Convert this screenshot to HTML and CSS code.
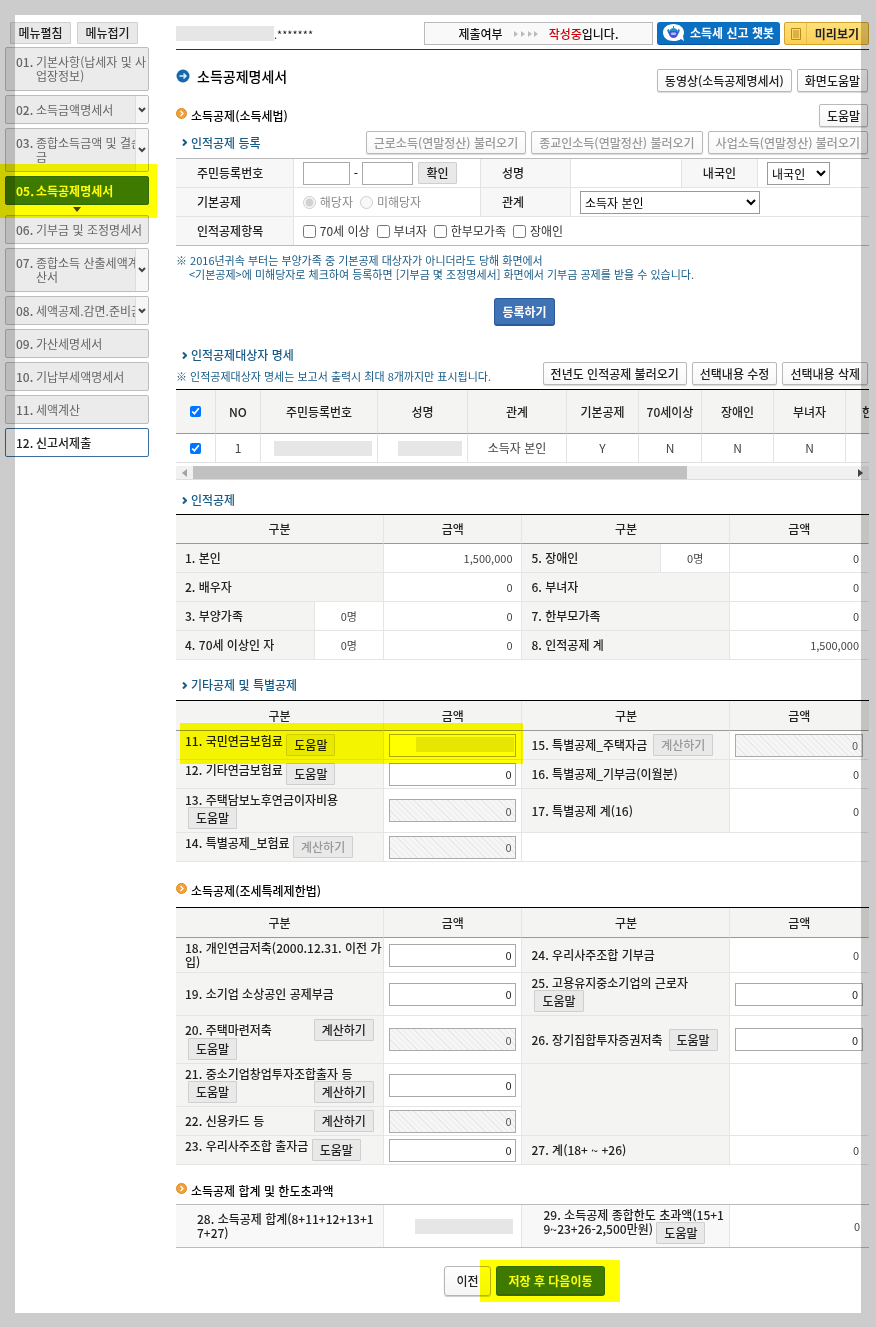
FILE: index.html
```html
<!DOCTYPE html>
<html lang="ko">
<head>
<meta charset="utf-8">
<meta name="viewport" content="width=device-width, initial-scale=1">
<title>소득공제명세서</title>
<link rel="stylesheet" href="styles.css">
</head>
<body>
<div class="page">
  <nav class="side" aria-label="신고서 메뉴">
    <div class="side-tools">
      <button class="btn gray" type="button">메뉴펼침</button>
      <button class="btn gray" type="button">메뉴접기</button>
    </div>
    <ul class="menu">
      <li><a href="#" class="item tall"><b>01.</b><span>기본사항(납세자 및 사업장정보)</span></a></li>
      <li><a href="#" class="item more"><b>02.</b><span>소득금액명세서</span><i><svg viewBox="0 0 8 6"><path d="M1 1l3 3 3-3"/></svg></i></a></li>
      <li><a href="#" class="item tall more"><b>03.</b><span>종합소득금액 및 결손금</span><i><svg viewBox="0 0 8 6"><path d="M1 1l3 3 3-3"/></svg></i></a></li>
      <li class="current"><a href="#" class="item on"><b>05.</b><span>소득공제명세서</span></a><svg class="caret" viewBox="0 0 8 5"><path d="M0 0h8L4 5z"/></svg><div class="mark mark-menu"></div></li>
      <li><a href="#" class="item"><b>06.</b><span>기부금 및 조정명세서</span></a></li>
      <li><a href="#" class="item tall more"><b>07.</b><span>종합소득 산출세액계산서</span><i><svg viewBox="0 0 8 6"><path d="M1 1l3 3 3-3"/></svg></i></a></li>
      <li><a href="#" class="item more"><b>08.</b><span class="one">세액공제.감면.준비금</span><i><svg viewBox="0 0 8 6"><path d="M1 1l3 3 3-3"/></svg></i></a></li>
      <li><a href="#" class="item"><b>09.</b><span>가산세명세서</span></a></li>
      <li><a href="#" class="item"><b>10.</b><span>기납부세액명세서</span></a></li>
      <li><a href="#" class="item"><b>11.</b><span>세액계산</span></a></li>
      <li><a href="#" class="item open"><b>12.</b><span>신고서제출</span></a></li>
    </ul>
  </nav>

  <main class="main">
    <header class="top">
      <div class="who"><span class="veil"></span>.*******</div>
      <div class="state"><span>제출여부</span>
        <svg class="steps" viewBox="0 0 24 6"><path d="M0 0l4 3-4 3zM7 0l4 3-4 3zM14 0l4 3-4 3zM20 0l4 3-4 3z"/></svg>
        <span><em>작성중</em>입니다.</span></div>
      <button class="chat" type="button"><svg viewBox="0 0 22 18"><path d="M10.500 0C4.500 0 0 3.500 0 8.500S4.500 17 10.500 17c3 0 5.500-.6 7.500-2l3 2-1-5c.7-1 1-2.200 1-3.500C21 3.500 16.500 0 10.500 0z" fill="#fff"/><path d="M5 5.500c1 2 0 3 2 4M16 5.500c-1 2 0 3-2 4" fill="none" stroke="#2878c4" stroke-width="2"/><circle cx="10.500" cy="9.500" r="4.500" fill="#4a50d8"/><path d="M6.500 7c1-4 7-4 8 0z" fill="#2a8cc9"/><rect x="8" y="8.500" width="5" height="2.500" rx="1" fill="#a9c4f8"/><path d="M10.500 5V2" stroke="#2a8cc9"/></svg>소득세 신고 챗봇</button>
      <button class="preview" type="button"><span><svg viewBox="0 0 10 12"><path d="M.5.5h9v11h-9zM2 3h6M2 5h6M2 7h6M2 9h6"/></svg></span>미리보기</button>
    </header>

    <div class="row title-row">
      <h1><svg viewBox="0 0 14 14"><circle cx="7" cy="7" r="6.500" fill="#1769ad"/><path d="M3.500 7h6M7.500 4.500L10 7 7.500 9.500" fill="none" stroke="#d9f0ff" stroke-width="1.500"/></svg>소득공제명세서</h1>
      <div class="btns"><button class="btn" type="button">동영상(소득공제명세서)</button><button class="btn" type="button">화면도움말</button></div>
    </div>

    <div class="row law-row">
      <h2 class="sec"><svg viewBox="0 0 11 11"><circle cx="5.500" cy="5.500" r="5" fill="#f2a136" stroke="#dc8b25"/><path d="M4.500 3l2.500 2.500L4.500 8" fill="none" stroke="#fff" stroke-width="1.300"/></svg>소득공제(소득세법)</h2>
      <div class="btns"><button class="btn" type="button">도움말</button></div>
    </div>
    <div class="row load-row">
      <h3 class="sub"><svg viewBox="0 0 5 7"><path d="M1 .5l3 3-3 3"/></svg>인적공제 등록</h3>
      <div class="btns"><button class="btn" type="button" disabled>근로소득(연말정산) 불러오기</button><button class="btn" type="button" disabled>종교인소득(연말정산) 불러오기</button><button class="btn" type="button" disabled>사업소득(연말정산) 불러오기</button></div>
    </div>

    <table class="form">
      <colgroup><col class="f1"><col class="f2"><col class="f3"><col class="f4"><col class="f5"><col class="f6"></colgroup>
      <tr><th scope="row"><label for="rrn1">주민등록번호</label></th><td><div class="line"><input id="rrn1" class="box rrn1" type="text"><span>-</span><input class="box rrn2" type="text" aria-label="주민등록번호 뒷자리"><button class="btn gray ok" type="button">확인</button></div></td><th scope="row">성명</th><td></td><th scope="row"><label for="nat">내국인</label></th><td class="last"><select id="nat" class="nat"><option>내국인</option></select></td></tr>
      <tr><th scope="row">기본공제</th><td><div class="line"><label class="off"><input type="radio" name="basic" checked disabled>해당자</label><label class="off"><input type="radio" name="basic" disabled>미해당자</label></div></td><th scope="row"><label for="rel">관계</label></th><td colspan="3" class="last"><select id="rel" class="rel"><option>소득자 본인</option></select></td></tr>
      <tr><th scope="row">인적공제항목</th><td colspan="5" class="last"><div class="line"><label><input type="checkbox">70세 이상</label><label><input type="checkbox">부녀자</label><label><input type="checkbox">한부모가족</label><label><input type="checkbox">장애인</label></div></td></tr>
    </table>
    <p class="note">※ 2016년귀속 부터는 부양가족 중 기본공제 대상자가 아니더라도 당해 화면에서<br>&lt;기본공제&gt;에 미해당자로 체크하여 등록하면 [기부금 몇 조정명세서] 화면에서 기부금 공제를 받을 수 있습니다.</p>
    <div class="center reg"><button class="register" type="button">등록하기</button></div>

    <h3 class="sub target"><svg viewBox="0 0 5 7"><path d="M1 .5l3 3-3 3"/></svg>인적공제대상자 명세</h3>
    <div class="row list-row">
      <p class="note flat">※ 인적공제대상자 명세는 보고서 출력시 최대 8개까지만 표시됩니다.</p>
      <div class="btns"><button class="btn" type="button">전년도 인적공제 불러오기</button><button class="btn" type="button">선택내용 수정</button><button class="btn" type="button">선택내용 삭제</button></div>
    </div>
    <div class="list-wrap">
      <table class="list">
        <colgroup><col class="l1"><col class="l2"><col class="l3"><col class="l4"><col class="l5"><col class="l6"><col class="l7"><col class="l6"><col class="l6"><col class="l8"></colgroup>
        <thead><tr><th><input type="checkbox" checked aria-label="전체 선택"></th><th>NO</th><th>주민등록번호</th><th>성명</th><th>관계</th><th>기본공제</th><th>70세이상</th><th>장애인</th><th>부녀자</th><th>한부모가족</th></tr></thead>
        <tbody><tr><td><input type="checkbox" checked aria-label="1번 선택"></td><td>1</td><td class="shade"><span class="veil"></span></td><td class="shade"><span class="veil short"></span></td><td>소득자 본인</td><td>Y</td><td>N</td><td>N</td><td>N</td><td></td></tr></tbody>
      </table>
    </div>
    <div class="scroll"><svg viewBox="0 0 5 8"><path d="M5 0v8L0 4z" fill="#a3a3a3"/></svg><div class="track"><div class="thumb"></div></div><svg viewBox="0 0 5 8"><path d="M0 0v8l5-4z" fill="#444"/></svg></div>

    <h3 class="sub personal"><svg viewBox="0 0 5 7"><path d="M1 .5l3 3-3 3"/></svg>인적공제</h3>
    <table class="sheet">
      <colgroup><col class="c2"><col class="c1"><col class="c2"><col class="c2"><col class="c1"><col class="c2"></colgroup>
      <thead><tr><th colspan="2">구분</th><th>금액</th><th colspan="2">구분</th><th>금액</th></tr></thead>
      <tbody>
        <tr><th colspan="2">1. 본인</th><td>1,500,000</td><th>5. 장애인</th><td class="mid">0명</td><td>0</td></tr>
        <tr><th colspan="2">2. 배우자</th><td>0</td><th colspan="2">6. 부녀자</th><td>0</td></tr>
        <tr><th>3. 부양가족</th><td class="mid">0명</td><td>0</td><th colspan="2">7. 한부모가족</th><td>0</td></tr>
        <tr><th>4. 70세 이상인 자</th><td class="mid">0명</td><td>0</td><th colspan="2">8. 인적공제 계</th><td>1,500,000</td></tr>
      </tbody>
    </table>

    <h3 class="sub other"><svg viewBox="0 0 5 7"><path d="M1 .5l3 3-3 3"/></svg>기타공제 및 특별공제</h3>
    <div class="marked">
    <table class="sheet wide-head">
      <colgroup><col class="c3"><col class="c2"><col class="c3"><col class="c2"></colgroup>
      <thead><tr><th>구분</th><th>금액</th><th>구분</th><th>금액</th></tr></thead>
      <tbody>
        <tr><th><label for="a11">11. 국민연금보험료</label> <button class="btn gray" type="button">도움말</button></th><td class="in"><div class="covered"><input id="a11" class="box" type="text"><span class="veil"></span></div></td><th><div class="line wide"><span>15. 특별공제_주택자금</span><button class="btn gray" type="button" disabled>계산하기</button></div></th><td class="in"><input class="box" type="text" value="0" readonly aria-label="15. 특별공제_주택자금"></td></tr>
        <tr><th><label for="a12">12. 기타연금보험료</label> <button class="btn gray" type="button">도움말</button></th><td class="in"><input id="a12" class="box" type="text" value="0"></td><th>16. 특별공제_기부금(이월분)</th><td>0</td></tr>
        <tr class="h44"><th><label for="a13">13. 주택담보노후연금이자비용</label><br><button class="btn gray ind" type="button">도움말</button></th><td class="in"><input id="a13" class="box" type="text" value="0" readonly></td><th>17. 특별공제 계(16)</th><td>0</td></tr>
        <tr><th><label for="a14">14. 특별공제_보험료</label> <button class="btn gray" type="button" disabled>계산하기</button></th><td class="in"><input id="a14" class="box" type="text" value="0" readonly></td><td colspan="2"></td></tr>
      </tbody>
    </table>
    <div class="mark mark-row"></div>
    </div>

    <h2 class="sec special"><svg viewBox="0 0 11 11"><circle cx="5.500" cy="5.500" r="5" fill="#f2a136" stroke="#dc8b25"/><path d="M4.500 3l2.500 2.500L4.500 8" fill="none" stroke="#fff" stroke-width="1.300"/></svg>소득공제(조세특례제한법)</h2>
    <table class="sheet wide-head">
      <colgroup><col class="c3"><col class="c2"><col class="c3"><col class="c2"></colgroup>
      <thead><tr><th>구분</th><th>금액</th><th>구분</th><th>금액</th></tr></thead>
      <tbody>
        <tr class="h35"><th><label for="a18">18. 개인연금저축(2000.12.31. 이전 가입)</label></th><td class="in"><input id="a18" class="box" type="text" value="0"></td><th>24. 우리사주조합 기부금</th><td>0</td></tr>
        <tr class="h43"><th><label for="a19">19. 소기업 소상공인 공제부금</label></th><td class="in"><input id="a19" class="box" type="text" value="0"></td><th><label for="a25">25. 고용유지중소기업의 근로자</label><br><button class="btn gray ind" type="button">도움말</button></th><td class="in"><input id="a25" class="box" type="text" value="0"></td></tr>
        <tr class="h48"><th><div class="line split"><label for="a20">20. 주택마련저축</label><button class="btn gray" type="button">계산하기</button></div><button class="btn gray ind tuck" type="button">도움말</button></th><td class="in"><input id="a20" class="box" type="text" value="0" readonly></td><th><div class="line wide"><label for="a26">26. 장기집합투자증권저축</label><button class="btn gray" type="button">도움말</button></div></th><td class="in"><input id="a26" class="box" type="text" value="0"></td></tr>
        <tr class="h43"><th><label for="a21">21. 중소기업창업투자조합출자 등</label><div class="line split"><button class="btn gray ind" type="button">도움말</button><button class="btn gray" type="button">계산하기</button></div></th><td class="in"><input id="a21" class="box" type="text" value="0"></td><th rowspan="2"></th><td rowspan="2"></td></tr>
        <tr><th><div class="line split"><label for="a22">22. 신용카드 등</label><button class="btn gray" type="button">계산하기</button></div></th><td class="in edge"><input id="a22" class="box" type="text" value="0" readonly></td></tr>
        <tr><th><label for="a23">23. 우리사주조합 출자금</label> <button class="btn gray" type="button">도움말</button></th><td class="in"><input id="a23" class="box" type="text" value="0"></td><th>27. 계(18+ ~ +26)</th><td>0</td></tr>
      </tbody>
    </table>

    <h2 class="sec total"><svg viewBox="0 0 11 11"><circle cx="5.500" cy="5.500" r="5" fill="#f2a136" stroke="#dc8b25"/><path d="M4.500 3l2.500 2.500L4.500 8" fill="none" stroke="#fff" stroke-width="1.300"/></svg>소득공제 합계 및 한도초과액</h2>
    <table class="sheet sum">
      <colgroup><col class="c3"><col class="c2"><col class="c3"><col class="c2"></colgroup>
      <tr><th>28. 소득공제 합계(8+11+12+13+17+27)</th><td><span class="veil"></span></td><th>29. 소득공제 종합한도 초과액(15+19~23+26-2,500만원) <button class="btn gray" type="button">도움말</button></th><td>0</td></tr>
    </table>

    <div class="center foot">
      <button class="prev" type="button">이전</button>
      <div class="marked"><button class="next" type="button">저장 후 다음이동</button><div class="mark mark-next"></div></div>
    </div>
  </main>
  <div class="shade-frame"></div>
</div>
</body>
</html>
```
FILE: styles.css
```css
* { box-sizing: border-box; }
body { margin: 0; background: #fff; }
body, button, input, select {
  font-family: "Noto Sans CJK KR", "Noto Sans", sans-serif;
  font-size: 12px;
  line-height: 14px;
  color: #222;
}
h1, h2, h3, p, ul { margin: 0; padding: 0; }
ul { list-style: none; }
a { color: inherit; text-decoration: none; }
input { margin: 0; }

.page { position: relative; display: flex; align-items: flex-start; padding: 22px 7px 32px 5px; }
.shade-frame { position: absolute; inset: 0; border: 15px solid rgba(0, 0, 0, .2); pointer-events: none; z-index: 5; }
.mark { position: absolute; background: #ff0; mix-blend-mode: multiply; pointer-events: none; z-index: 2; }
.marked, .current { position: relative; }
.veil { display: inline-block; width: 98px; height: 15px; background: #e6e6e6; }
.veil.short { width: 64px; }

/* buttons */
.btn {
  height: 23px;
  padding: 0 7px;
  border: 1px solid #b9b9b9;
  border-radius: 2px;
  background: linear-gradient(#fff, #f7f7f7);
  box-shadow: 0 1px 1px rgba(0, 0, 0, .15);
  font-weight: 500;
  white-space: nowrap;
}
.btn:disabled { color: #999; }
.btn.gray { height: 22px; background: #e9e9e9; border-color: #cfcfcf; border-radius: 1px; box-shadow: none; vertical-align: top; }
.btns { display: flex; gap: 5px; margin-right: 1px; }

/* side menu */
.side { width: 144px; flex: none; margin-right: 27px; }
.side-tools { display: flex; gap: 6px; padding-left: 5px; margin-bottom: 3px; }
.side-tools .btn { width: 61px; padding: 0; }
.menu { display: flex; flex-direction: column; gap: 4px; }
.item {
  position: relative;
  display: flex;
  align-items: center;
  gap: 4px;
  height: 29px;
  padding: 0 0 0 10px;
  border: 1px solid #bdbdbd;
  border-radius: 2px;
  background: #ebebeb;
  color: #666;
  overflow: hidden;
  word-break: break-all;
}
.item b { width: 16px; flex: none; font-weight: 500; white-space: nowrap; }
.item.tall { height: 44px; }
.item.tall b { align-self: flex-start; padding-top: 7px; }
.item .one { white-space: nowrap; }
.item i { position: absolute; top: 0; right: 0; bottom: 0; width: 13px; display: flex; align-items: center; justify-content: center; background: #f6f6f6; border-left: 1px solid #ddd; }
.item i svg { width: 8px; height: 6px; fill: none; stroke: #444; stroke-width: 2; }
.item.on { background: #3f7a0d; border-color: #356a08; color: #fff; font-weight: 700; }
.item.on b { font-weight: 700; }
.item.open { background: #fff; border-color: #3c6f9f; color: #222; font-weight: 500; }
.current { padding-bottom: 6px; }
.caret { position: absolute; left: 68px; bottom: -1px; width: 8px; height: 5px; fill: #444; }
.mark-menu { left: -5px; top: -12px; right: -8px; bottom: -7px; }

/* top bar */
.main { flex: 1; min-width: 0; }
.top { display: flex; align-items: center; gap: 4px; padding-bottom: 4px; border-bottom: 1px solid #333; }
.who { flex: 1; display: flex; align-items: center; font-size: 11px; }
.state { display: flex; align-items: center; justify-content: center; gap: 11px; width: 229px; height: 23px; border: 1px solid #bbb; background: #f9f9f9; font-weight: 500; color: #111; }
.state em { font-style: normal; color: #d0000b; }
.steps { width: 24px; height: 6px; fill: #bbb; }
.chat { display: flex; align-items: center; justify-content: center; gap: 5px; width: 123px; height: 23px; padding: 0; border: 0; border-radius: 3px; background: #0b6fc2; border-bottom: 1px solid #08549a; color: #fff; font-weight: 700; white-space: nowrap; }
.chat svg { width: 22px; height: 18px; }
.preview { display: flex; align-items: center; width: 85px; height: 23px; padding: 0 9px 0 0; justify-content: space-between; border: 1px solid #d3a52f; border-radius: 2px; background: linear-gradient(#ffe07a, #fbcf55); font-weight: 700; }
.preview span { width: 22px; height: 100%; display: flex; align-items: center; justify-content: center; border-right: 1px solid #e8bd4a; }
.preview svg { width: 10px; height: 12px; fill: none; stroke: #b98c1e; }

/* headings */
.row { display: flex; justify-content: space-between; align-items: center; }
.title-row { margin-top: 19px; align-items: flex-start; }
h1 { display: flex; align-items: center; gap: 7px; font-size: 14px; font-weight: 500; color: #000; }
h1 svg { width: 14px; height: 14px; }
.sec { display: flex; align-items: center; gap: 4px; font-size: 12px; font-weight: 500; color: #000; }
.sec svg { width: 11px; height: 11px; margin-bottom: 5px; }
.sub { display: flex; align-items: center; gap: 4px; padding-left: 6px; font-size: 12px; font-weight: 500; color: #175b87; }
.sub svg { width: 5px; height: 7px; fill: none; stroke: #175b87; stroke-width: 2; }
.law-row { margin-top: 12px; }
.load-row { margin-top: 4px; }
.target { margin-top: 22px; }
.personal { margin-top: 13px; }
.other { margin-top: 18px; }
.special { margin-top: 21px; }
.total { margin-top: 18px; }

/* form */
table { width: 100%; border-spacing: 0; table-layout: fixed; }
.form { margin-top: 4px; border-top: 1px solid #bbb; border-bottom: 1px solid #bbb; }
.f1 { width: 17%; } .f2 { width: 27%; } .f3 { width: 13%; } .f4 { width: 16%; } .f5 { width: 11%; } .f6 { width: 16%; }
.form tr { height: 29px; }
.form th, .form td { padding: 0 9px; border-bottom: 1px solid #e3e3e3; border-right: 1px solid #e3e3e3; text-align: left; font-weight: 500; }
.form th { padding-left: 21px; background: #f7f7f7; }
.form .last { border-right: 0; }
.form tr:last-child > * { border-bottom: 0; }
.form tr:last-child { height: 28px; }
.line { display: flex; align-items: center; gap: 4px; }
.line label { display: flex; align-items: center; gap: 4px; color: #333; font-weight: 400; white-space: nowrap; }
.line label + label { margin-left: 3px; }
.line .off { color: #888; }
.line input[type=checkbox], .line input[type=radio] { width: 13px; height: 13px; }
.box { height: 23px; border: 1px solid #aaa; border-radius: 0; padding: 0 4px; background: #fff; text-align: right; }
.box:read-only { color: #555; background: repeating-linear-gradient(45deg, #f6f6f6 0 3px, #e9e9e9 3px 4px); }
.rrn1 { width: 47px; }
.rrn2 { width: 51px; }
.ok { width: 39px; padding: 0; margin-left: 1px; }
select { height: 23px; padding: 0; border: 1px solid #999; border-radius: 0; background: #fff; color: #000; vertical-align: middle; }
.nat { width: 63px; }
.rel { width: 180px; }
.note { margin-top: 7px; padding-left: 13px; text-indent: -13px; font-size: 11px; color: #175b87; }
.note.flat { margin: 0; align-self: flex-end; line-height: 18px; white-space: nowrap; }
.center { display: flex; justify-content: center; padding-left: 4px; }
.reg { margin-top: 17px; }
.register { width: 61px; height: 28px; padding: 0; border: 1px solid #2c5a99; border-bottom-width: 2px; border-radius: 3px; background: #3f73b5; color: #fff; font-weight: 700; }

/* dependants list */
.list-wrap { margin-top: 4px; overflow: hidden; }
.list { width: 758px; border-top: 1px solid #000; }
.l1 { width: 40px; } .l2 { width: 45px; } .l3 { width: 117px; } .l4 { width: 90px; } .l5 { width: 99px; } .l6 { width: 72px; } .l7 { width: 63px; } .l8 { width: 88px; }
.list th, .list td { padding: 0; text-align: center; border-right: 1px solid #e3e3e3; font-weight: 400; }
.list th { height: 44px; background: #f4f4f2; border-bottom: 1px solid #999; font-weight: 500; }
.list td { height: 29px; border-bottom: 1px solid #e3e3e3; color: #444; }
.list input { display: block; width: 11px; height: 11px; margin: 0 auto; }
.list .shade { text-align: right; padding-right: 5px; }
.list .veil { vertical-align: middle; }
.scroll { display: flex; align-items: center; gap: 6px; height: 14px; margin-top: 3px; padding: 0 6px; background: #f1f1f1; border-bottom: 1px solid #ddd; }
.scroll svg { width: 5px; height: 8px; }
.track { flex: 1; height: 100%; }
.thumb { width: 75%; height: 100%; background: #c1c1c1; }

/* amount tables */
.sheet { margin-top: 7px; border-top: 1px solid #000; }
.c1 { width: 10%; } .c2 { width: 20%; } .c3 { width: 30%; }
.sheet tr { height: 29px; }
.sheet.wide-head { margin-top: 8px; }
.sheet.wide-head thead tr { height: 30px; }
.sheet .h35 { height: 35px; }
.sheet .h43 { height: 43px; }
.sheet .h44 { height: 44px; }
.sheet .h48 { height: 48px; }
.sheet th, .sheet td { padding: 0 9px; border-bottom: 1px solid #e5e5e5; border-right: 1px solid #e5e5e5; font-weight: 500; word-break: break-all; }
.sheet tr > :last-child { border-right-color: transparent; }
.sheet tr > .edge { border-right-color: #e5e5e5; }
.sheet th { background: #f4f4f2; text-align: left; }
.sheet tbody th { padding-right: 0; }
.sheet thead th { text-align: center; border-bottom-color: #999; }
.sheet td { text-align: right; font-size: 11px; font-weight: 400; color: #444; }
.sheet .mid { text-align: center; }
.sheet .in { padding: 0 5px; }
.sheet .box { display: block; width: 100%; font-size: 11px; }
.sheet .line label { font-weight: 500; color: #222; }
.line.wide { gap: 6px; }
.line.split { justify-content: space-between; padding-right: 9px; }
.ind { margin-left: 3px; }
.tuck { display: block; margin-top: -3px; }
.covered { position: relative; }
.covered .veil { position: absolute; right: 2px; top: 3px; }
.mark-row { left: 4px; top: 23px; right: 50%; height: 41px; }
.sum { margin-top: 5px; border-top: 1px solid #bbb; border-bottom: 1px solid #bbb; }
.sheet.sum tr { height: 42px; }
.sheet.sum th { padding: 0 3px 0 21px; background: #f8f8f8; }
.sheet.sum th, .sheet.sum td { border-bottom: 0; }
.sum .veil { vertical-align: middle; }
.sheet.sum td { padding-right: 8px; }

/* footer */
.foot { gap: 5px; margin-top: 18px; }
.prev, .next { height: 30px; padding: 0; border-radius: 3px; }
.prev { width: 47px; border: 1px solid #b5b5b5; background: linear-gradient(#fff, #f5f5f5); box-shadow: 0 1px 1px rgba(0, 0, 0, .2); font-weight: 500; }
.next { width: 109px; border: 1px solid #356a08; border-bottom-width: 2px; background: #3f7a0d; color: #fff; font-weight: 700; }
.mark-next { inset: -6px -15px -6px -16px; }
```
